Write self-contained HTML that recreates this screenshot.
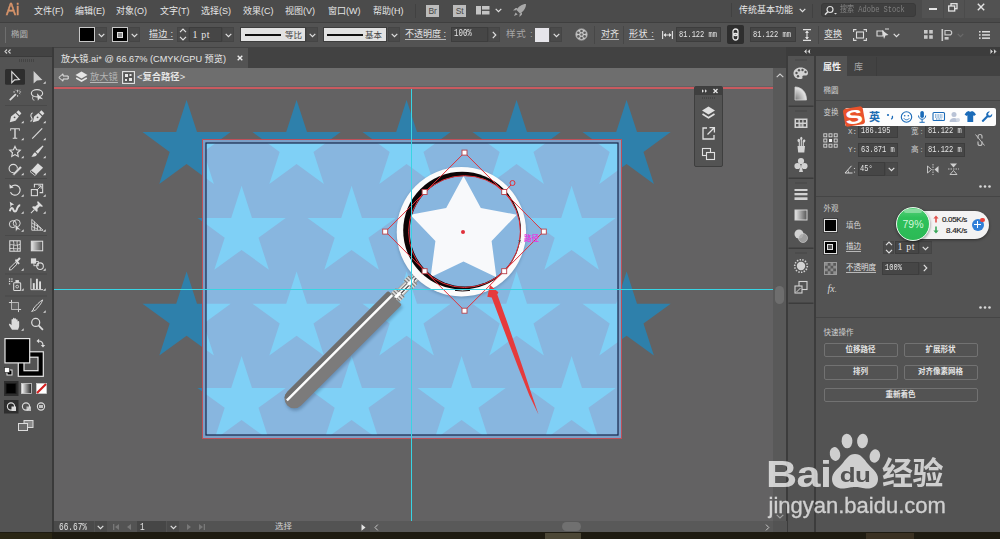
<!DOCTYPE html>
<html lang="zh-CN">
<head>
<meta charset="utf-8">
<title>放大镜.ai</title>
<style>
*{box-sizing:border-box;margin:0;padding:0}
html,body{width:1000px;height:539px;overflow:hidden;background:#535353}
body{position:relative;font-family:"Liberation Sans","Noto Sans CJK SC",sans-serif;font-size:9.5px;color:#e6e6e6;line-height:12px}
.a{position:absolute}
.t{position:absolute;white-space:nowrap;height:12px;line-height:12px}
.u{text-decoration:underline;text-underline-offset:2px;text-decoration-color:#b8b8b8}
.mono{font-family:"Liberation Mono","Noto Sans CJK SC",monospace}
.fld{position:absolute;background:#464646;border:1px solid #3d3d3d}
.dd{position:absolute;background:#4a4a4a;border:1px solid #454545}
.sq{transform:scaleX(.74);transform-origin:0 50%}
svg{position:absolute;overflow:visible}
.g{color:#a6a6a6}
.lbl{font-size:7.500px;color:#cfcfcf}.btn{border:1px solid #727272;border-radius:2px;text-align:center;font-size:7.500px;line-height:12.500px;font-weight:bold;color:#e4e4e4}
</style>
</head>
<body>

<!-- ===== BASE BACKGROUNDS ===== -->
<div class="a" style="left:0;top:0;width:1000px;height:22px;background:#4b4b4b"></div>
<div class="a" style="left:0;top:22px;width:1000px;height:26px;background:#535353;border-top:1px solid #3f3f3f"></div>
<div class="a" style="left:0;top:47px;width:1000px;height:21px;background:#424242"></div>
<div class="a" style="left:54px;top:68px;width:735px;height:453px;background:#636263"></div>

<svg id="cv" width="1000" height="539" viewBox="0 0 1000 539" style="left:0;top:0">
<defs>
<clipPath id="cvclip"><rect x="54" y="68" width="722" height="453"/></clipPath>
<clipPath id="abclip"><rect x="206" y="143" width="412" height="292"/></clipPath>
<clipPath id="lensclip"><circle cx="465" cy="231.2" r="55.3"/></clipPath>
<linearGradient id="hg" x1="0" y1="0" x2="0" y2="1"><stop offset="0" stop-color="#5a5a5a"/><stop offset=".22" stop-color="#8a8a8a"/><stop offset=".36" stop-color="#f2f2f2"/><stop offset=".5" stop-color="#8c8c8c"/><stop offset="1" stop-color="#6a6a6a"/></linearGradient>
<linearGradient id="cg" x1="0" y1="0" x2="0" y2="1"><stop offset="0" stop-color="#8a8a8a"/><stop offset=".25" stop-color="#fff"/><stop offset=".75" stop-color="#f4f4f4"/><stop offset="1" stop-color="#9a9a9a"/></linearGradient>
<filter id="sh" x="-20%" y="-20%" width="140%" height="140%"><feGaussianBlur stdDeviation="1.6"/></filter>
</defs>
<g clip-path="url(#cvclip)">
<g fill="#2e80ab">
<polygon points="186.6,100.0 197.0,132.1 230.7,132.1 203.5,151.9 213.9,183.9 186.6,164.1 159.3,183.9 169.7,151.9 142.5,132.1 176.2,132.1"/>
<polygon points="296.6,100.0 307.0,132.1 340.7,132.1 313.5,151.9 323.9,183.9 296.6,164.1 269.3,183.9 279.7,151.9 252.5,132.1 286.2,132.1"/>
<polygon points="406.6,100.0 417.0,132.1 450.7,132.1 423.5,151.9 433.9,183.9 406.6,164.1 379.3,183.9 389.7,151.9 362.5,132.1 396.2,132.1"/>
<polygon points="516.6,100.0 527.0,132.1 560.7,132.1 533.5,151.9 543.9,183.9 516.6,164.1 489.3,183.9 499.7,151.9 472.5,132.1 506.2,132.1"/>
<polygon points="626.6,100.0 637.0,132.1 670.7,132.1 643.5,151.9 653.9,183.9 626.6,164.1 599.3,183.9 609.7,151.9 582.5,132.1 616.2,132.1"/>
<polygon points="241.6,185.8 252.0,217.9 285.7,217.9 258.5,237.7 268.9,269.7 241.6,249.9 214.3,269.7 224.7,237.7 197.5,217.9 231.2,217.9"/>
<polygon points="351.6,185.8 362.0,217.9 395.7,217.9 368.5,237.7 378.9,269.7 351.6,249.9 324.3,269.7 334.7,237.7 307.5,217.9 341.2,217.9"/>
<polygon points="461.6,185.8 472.0,217.9 505.7,217.9 478.5,237.7 488.9,269.7 461.6,249.9 434.3,269.7 444.7,237.7 417.5,217.9 451.2,217.9"/>
<polygon points="571.6,185.8 582.0,217.9 615.7,217.9 588.5,237.7 598.9,269.7 571.6,249.9 544.3,269.7 554.7,237.7 527.5,217.9 561.2,217.9"/>
<polygon points="186.6,271.6 197.0,303.7 230.7,303.7 203.5,323.5 213.9,355.5 186.6,335.7 159.3,355.5 169.7,323.5 142.5,303.7 176.2,303.7"/>
<polygon points="296.6,271.6 307.0,303.7 340.7,303.7 313.5,323.5 323.9,355.5 296.6,335.7 269.3,355.5 279.7,323.5 252.5,303.7 286.2,303.7"/>
<polygon points="406.6,271.6 417.0,303.7 450.7,303.7 423.5,323.5 433.9,355.5 406.6,335.7 379.3,355.5 389.7,323.5 362.5,303.7 396.2,303.7"/>
<polygon points="516.6,271.6 527.0,303.7 560.7,303.7 533.5,323.5 543.9,355.5 516.6,335.7 489.3,355.5 499.7,323.5 472.5,303.7 506.2,303.7"/>
<polygon points="626.6,271.6 637.0,303.7 670.7,303.7 643.5,323.5 653.9,355.5 626.6,335.7 599.3,355.5 609.7,323.5 582.5,303.7 616.2,303.7"/>
<polygon points="241.6,355.9 252.0,388.0 285.7,388.0 258.5,407.8 268.9,439.8 241.6,420.0 214.3,439.8 224.7,407.8 197.5,388.0 231.2,388.0"/>
<polygon points="351.6,355.9 362.0,388.0 395.7,388.0 368.5,407.8 378.9,439.8 351.6,420.0 324.3,439.8 334.7,407.8 307.5,388.0 341.2,388.0"/>
<polygon points="461.6,355.9 472.0,388.0 505.7,388.0 478.5,407.8 488.9,439.8 461.6,420.0 434.3,439.8 444.7,407.8 417.5,388.0 451.2,388.0"/>
<polygon points="571.6,355.9 582.0,388.0 615.7,388.0 588.5,407.8 598.9,439.8 571.6,420.0 544.3,439.8 554.7,407.8 527.5,388.0 561.2,388.0"/>
</g>
<rect x="202.5" y="139.5" width="419" height="299" fill="none" stroke="#bf4f58" stroke-width="1"/>
<rect x="203" y="140" width="418" height="298" fill="#7b9fc7"/>
<rect x="206" y="143" width="412" height="292" fill="#88b6df"/>
<g clip-path="url(#abclip)" fill="#7fd0f6">
<polygon points="186.6,100.0 197.0,132.1 230.7,132.1 203.5,151.9 213.9,183.9 186.6,164.1 159.3,183.9 169.7,151.9 142.5,132.1 176.2,132.1"/>
<polygon points="296.6,100.0 307.0,132.1 340.7,132.1 313.5,151.9 323.9,183.9 296.6,164.1 269.3,183.9 279.7,151.9 252.5,132.1 286.2,132.1"/>
<polygon points="406.6,100.0 417.0,132.1 450.7,132.1 423.5,151.9 433.9,183.9 406.6,164.1 379.3,183.9 389.7,151.9 362.5,132.1 396.2,132.1"/>
<polygon points="516.6,100.0 527.0,132.1 560.7,132.1 533.5,151.9 543.9,183.9 516.6,164.1 489.3,183.9 499.7,151.9 472.5,132.1 506.2,132.1"/>
<polygon points="626.6,100.0 637.0,132.1 670.7,132.1 643.5,151.9 653.9,183.9 626.6,164.1 599.3,183.9 609.7,151.9 582.5,132.1 616.2,132.1"/>
<polygon points="241.6,185.8 252.0,217.9 285.7,217.9 258.5,237.7 268.9,269.7 241.6,249.9 214.3,269.7 224.7,237.7 197.5,217.9 231.2,217.9"/>
<polygon points="351.6,185.8 362.0,217.9 395.7,217.9 368.5,237.7 378.9,269.7 351.6,249.9 324.3,269.7 334.7,237.7 307.5,217.9 341.2,217.9"/>
<polygon points="461.6,185.8 472.0,217.9 505.7,217.9 478.5,237.7 488.9,269.7 461.6,249.9 434.3,269.7 444.7,237.7 417.5,217.9 451.2,217.9"/>
<polygon points="571.6,185.8 582.0,217.9 615.7,217.9 588.5,237.7 598.9,269.7 571.6,249.9 544.3,269.7 554.7,237.7 527.5,217.9 561.2,217.9"/>
<polygon points="186.6,271.6 197.0,303.7 230.7,303.7 203.5,323.5 213.9,355.5 186.6,335.7 159.3,355.5 169.7,323.5 142.5,303.7 176.2,303.7"/>
<polygon points="296.6,271.6 307.0,303.7 340.7,303.7 313.5,323.5 323.9,355.5 296.6,335.7 269.3,355.5 279.7,323.5 252.5,303.7 286.2,303.7"/>
<polygon points="406.6,271.6 417.0,303.7 450.7,303.7 423.5,323.5 433.9,355.5 406.6,335.7 379.3,355.5 389.7,323.5 362.5,303.7 396.2,303.7"/>
<polygon points="516.6,271.6 527.0,303.7 560.7,303.7 533.5,323.5 543.9,355.5 516.6,335.7 489.3,355.5 499.7,323.5 472.5,303.7 506.2,303.7"/>
<polygon points="626.6,271.6 637.0,303.7 670.7,303.7 643.5,323.5 653.9,355.5 626.6,335.7 599.3,355.5 609.7,323.5 582.5,303.7 616.2,303.7"/>
<polygon points="241.6,355.9 252.0,388.0 285.7,388.0 258.5,407.8 268.9,439.8 241.6,420.0 214.3,439.8 224.7,407.8 197.5,388.0 231.2,388.0"/>
<polygon points="351.6,355.9 362.0,388.0 395.7,388.0 368.5,407.8 378.9,439.8 351.6,420.0 324.3,439.8 334.7,407.8 307.5,388.0 341.2,388.0"/>
<polygon points="461.6,355.9 472.0,388.0 505.7,388.0 478.5,407.8 488.9,439.8 461.6,420.0 434.3,439.8 444.7,407.8 417.5,388.0 451.2,388.0"/>
<polygon points="571.6,355.9 582.0,388.0 615.7,388.0 588.5,407.8 598.9,439.8 571.6,420.0 544.3,439.8 554.7,407.8 527.5,388.0 561.2,388.0"/>
</g>
<rect x="206" y="143" width="412" height="292" fill="none" stroke="#16264a" stroke-width="1.2"/>
<g transform="translate(410.9,281.9) rotate(135)">
<path d="M22.5,-9.75 H165 a9.75,9.75 0 0 1 0,19.5 H22.5 Z" fill="#2a4a6a" opacity=".35" filter="url(#sh)" transform="translate(1,-2.5)"/>
<rect x="-10" y="-4.6" width="34" height="9.200" fill="url(#cg)"/>
<rect x="-10" y="-1.800" width="34" height="1.300" fill="#4a4a4a"/><rect x="-10" y="1.200" width="34" height="1" fill="#6a6a6a"/>
<rect x="-3" y="-6.200" width="7" height="12.400" fill="#d8d8d8"/>
<rect x="-3" y="-6.200" width="1.200" height="12.400" fill="#7a7a7a"/><rect x="-0.1" y="-6.200" width="1.200" height="12.400" fill="#7a7a7a"/><rect x="2.8" y="-6.200" width="1.200" height="12.400" fill="#7a7a7a"/>
<rect x="-3" y="-1.500" width="7" height="3" fill="#fff"/>
<rect x="15" y="-6.200" width="7" height="12.400" fill="#d8d8d8"/>
<rect x="15" y="-6.200" width="1.200" height="12.400" fill="#7a7a7a"/><rect x="17.9" y="-6.200" width="1.200" height="12.400" fill="#7a7a7a"/><rect x="20.8" y="-6.200" width="1.200" height="12.400" fill="#7a7a7a"/>
<rect x="15" y="-1.500" width="7" height="3" fill="#fff"/>
<path d="M24,-9.750 H165 a9.750,9.750 0 0 1 0,19.500 H24 a1.500,1.500 0 0 1 -1.500,-1.500 V-8.250 a1.500,1.500 0 0 1 1.500,-1.500 Z" fill="#7c7b7b"/>
<path d="M24,9.750 H165 a9.750,9.750 0 0 0 6.500,-2.500 L170,5 H22.500 V8.250 a1.500,1.500 0 0 0 1.500,1.500 Z" fill="#6e6e6e"/>
<rect x="22.500" y="2.650" width="149" height="2.400" fill="#fdfdfd"/>
</g>
<circle cx="461.4" cy="233" r="65" fill="#3a5a7a" opacity=".35" filter="url(#sh)"/>
<circle cx="461.4" cy="231.8" r="64.7" fill="#fbfbfb"/>
<path d="M455,290.400 Q462.500,291.600 470,290.400" fill="none" stroke="#1a0a0c" stroke-width="1"/>
<circle cx="462.1" cy="230.6" r="58.9" fill="#0c0506"/>
<circle cx="465" cy="231.2" r="55.3" fill="#88b6df"/>
<g clip-path="url(#lensclip)"><polygon points="463.5,176.0 480.8,208.1 516.8,214.7 491.6,241.1 496.4,277.3 463.5,261.5 430.6,277.3 435.4,241.1 410.2,214.7 446.2,208.1" fill="#f8f9fb"/></g>
<g fill="none" stroke="#e0303a" stroke-width="1">
<circle cx="464.5" cy="231.6" r="55.9"/>
<polygon points="464.5,152.6 543.5,231.6 464.5,310.7 385.5,231.6"/>
<line x1="504.2" y1="192.2" x2="511" y2="185"/>
<circle cx="512.5" cy="183" r="2.5"/>
</g>
<rect x="462.0" y="150.1" width="5" height="5" fill="#fff" stroke="#b8404a" stroke-width=".9"/>
<rect x="541.3" y="229.1" width="5" height="5" fill="#fff" stroke="#b8404a" stroke-width=".9"/>
<rect x="462.0" y="308.2" width="5" height="5" fill="#fff" stroke="#b8404a" stroke-width=".9"/>
<rect x="382.7" y="229.1" width="5" height="5" fill="#fff" stroke="#b8404a" stroke-width=".9"/>
<rect x="422.1" y="189.5" width="5" height="5" fill="#fff" stroke="#b8404a" stroke-width=".9"/>
<rect x="501.7" y="189.5" width="5" height="5" fill="#fff" stroke="#b8404a" stroke-width=".9"/>
<rect x="422.1" y="268.7" width="5" height="5" fill="#fff" stroke="#b8404a" stroke-width=".9"/>
<rect x="501.7" y="268.7" width="5" height="5" fill="#fff" stroke="#b8404a" stroke-width=".9"/>
<circle cx="463" cy="232" r="2" fill="#e0303a"/>
<polygon points="490,285 498.4,292.2 497.3,294.6 508.2,325 523.2,369 532,395.5 538.5,414.6 529.4,395.5 518.8,369 502,325 491.7,297.4 487.3,296.8" fill="#e63a3c"/>
<rect x="411" y="88" width="1" height="433" fill="#38d4e4"/>
<rect x="54" y="289" width="722" height="1" fill="#38d4e4"/>
</g>
<path d="M518.5,240 l2.400,2.400 m0,-2.400 l-2.400,2.400" stroke="#333" stroke-width=".7"/>
<text x="524" y="240.500" font-size="7.500" fill="#e23ee2" font-weight="bold" font-family="'Liberation Sans','Noto Sans CJK SC',sans-serif">路径</text>
</svg>
<!-- ===== MENU BAR ===== -->
<div class="t" style="left:6px;top:0px;font-size:16.5px;height:19px;line-height:19px;color:#d8946a;-webkit-text-stroke:.5px #d8946a;transform:scaleX(.9);transform-origin:0 50%">Ai</div>
<div class="t" style="left:34px;top:5px;font-size:9px">文件(F)</div>
<div class="t" style="left:75px;top:5px;font-size:9px">编辑(E)</div>
<div class="t" style="left:116px;top:5px;font-size:9px">对象(O)</div>
<div class="t" style="left:160px;top:5px;font-size:9px">文字(T)</div>
<div class="t" style="left:201px;top:5px;font-size:9px">选择(S)</div>
<div class="t" style="left:243px;top:5px;font-size:9px">效果(C)</div>
<div class="t" style="left:285px;top:5px;font-size:9px">视图(V)</div>
<div class="t" style="left:328px;top:5px;font-size:9px">窗口(W)</div>
<div class="t" style="left:373px;top:5px;font-size:9px">帮助(H)</div>
<div class="a" style="left:415px;top:4px;width:1px;height:14px;background:#414141"></div>
<div class="a" style="left:426px;top:5px;width:13px;height:12px;background:#bcbcbc;color:#484848;font-size:8.5px;line-height:12px;text-align:center;letter-spacing:-.3px">Br</div>
<div class="a" style="left:453px;top:5px;width:13px;height:12px;background:#bcbcbc;color:#484848;font-size:8.5px;line-height:12px;text-align:center;letter-spacing:-.3px">St</div>
<svg style="left:476px;top:6px" width="14" height="9"><rect x="0" y="0" width="5" height="8.5" fill="#c4c4c4"/><rect x="6" y="0" width="7.5" height="3.6" fill="#c4c4c4"/><rect x="6" y="4.9" width="7.5" height="3.6" fill="#c4c4c4"/></svg>
<svg style="left:495px;top:8px" width="7" height="5"><path d="M.7,.8 L3.5,3.6 L6.3,.8" fill="none" stroke="#e0e0e0" stroke-width="1.2"/></svg>
<svg style="left:512px;top:3px" width="15" height="15" viewBox="0 0 15 15"><path d="M14,1 C10,1 6.5,3.5 4.5,7 L8,10.5 C11.5,8.5 14,5 14,1 Z" fill="#a8a8a8"/><path d="M4.2,7.2 L1,7.6 L3.6,5 L5.6,5 Z" fill="#a8a8a8"/><path d="M7.8,10.8 L7.4,14 L10,11.4 L10,9.4 Z" fill="#a8a8a8"/><path d="M3.6,9.4 L5.6,11.4 L2,13 Z" fill="#a8a8a8"/></svg>
<div class="a" style="left:731px;top:3px;width:1px;height:14px;background:#414141"></div>
<div class="t" style="left:739px;top:3.500px;font-size:9px">传统基本功能</div>
<svg style="left:799px;top:8px" width="7" height="5"><path d="M.7,.8 L3.5,3.6 L6.3,.8" fill="none" stroke="#e0e0e0" stroke-width="1.2"/></svg>
<div class="a" style="left:812px;top:4px;width:1px;height:14px;background:#414141"></div>
<div class="a" style="left:821px;top:3px;width:95px;height:14px;background:#3f3f3f;border:1px solid #3a3a3a;border-radius:3px"></div>
<svg style="left:824px;top:4.500px" width="14" height="11"><circle cx="6" cy="4.5" r="3" fill="none" stroke="#e0e0e0" stroke-width="1.2"/><path d="M3.8,6.8 L1,9.8" stroke="#e0e0e0" stroke-width="1.4"/><path d="M10,8 l1.5,1.5 l1.5,-1.5" fill="#e0e0e0"/></svg>
<div class="t mono sq" style="left:840px;top:4px;color:#808080;font-size:9.5px">搜索 Adobe Stock</div>
<div class="a" style="left:922px;top:0;width:78px;height:17.500px;background:#525252"></div><div class="a" style="left:943px;top:0;width:1px;height:17.500px;background:#4b4b4b"></div><div class="a" style="left:964px;top:0;width:1px;height:17.500px;background:#4b4b4b"></div>
<div class="a" style="left:929px;top:8.300px;width:8px;height:2px;background:#e4e4e4"></div>
<svg style="left:948px;top:3px" width="10" height="9"><rect x="3" y=".7" width="6" height="5" fill="none" stroke="#e4e4e4" stroke-width="1.3"/><rect x=".7" y="3" width="6" height="5" fill="#525252" stroke="#e4e4e4" stroke-width="1.3"/></svg>
<svg style="left:977px;top:3px" width="8" height="8"><path d="M.8,.8 L7.200,7.200 M7.200,.8 L.8,7.200" stroke="#e4e4e4" stroke-width="1.400"/></svg>

<!-- ===== CONTROL BAR ===== -->
<div class="a" style="left:5px;top:27px;width:1px;height:16px;background:#6e6e6e"></div>
<div class="t" style="left:11px;top:28px;font-size:8.5px;color:#b2b2b2">椭圆</div>
<div class="a" style="left:79px;top:27px;width:16px;height:15px;background:#000;border:1px solid #c8c8c8"></div>
<div class="dd" style="left:95px;top:27px;width:12px;height:15px"></div>
<svg style="left:97.5px;top:33px" width="7" height="5"><path d="M.7,.8 L3.5,3.6 L6.3,.8" fill="none" stroke="#e0e0e0" stroke-width="1.2"/></svg>
<div class="a" style="left:112px;top:27px;width:16px;height:15px;background:#000;border:1px solid #c8c8c8"></div>
<div class="a" style="left:117px;top:31.5px;width:6px;height:6px;background:#8a8a8a;border:1px solid #e0e0e0"></div>
<div class="dd" style="left:128px;top:27px;width:12px;height:15px"></div>
<svg style="left:130.5px;top:33px" width="7" height="5"><path d="M.7,.8 L3.5,3.6 L6.3,.8" fill="none" stroke="#e0e0e0" stroke-width="1.2"/></svg>
<div class="t u" style="left:149px;top:28px;font-size:9px;letter-spacing:.3px">描边 :</div>
<div class="dd" style="left:177px;top:27px;width:12px;height:15px"></div>
<svg style="left:179px;top:28px" width="8" height="13"><path d="M1,4.2 L4,1.2 L7,4.2 M1,8.8 L4,11.8 L7,8.8" fill="none" stroke="#e0e0e0" stroke-width="1.2"/></svg>
<div class="fld" style="left:189px;top:27px;width:33px;height:15px"></div>
<div class="t" style="left:192.5px;top:28.5px;font-size:10px;letter-spacing:.6px;font-family:'Liberation Serif',serif">1 pt</div>
<div class="dd" style="left:222px;top:27px;width:12px;height:15px"></div>
<svg style="left:224.5px;top:33px" width="7" height="5"><path d="M.7,.8 L3.5,3.6 L6.3,.8" fill="none" stroke="#e0e0e0" stroke-width="1.2"/></svg>
<div class="a" style="left:240px;top:27px;width:66px;height:15px;background:#464646;border:1px solid #3d3d3d"></div>
<div class="a" style="left:241px;top:28px;width:64px;height:13px;background:#e2e2e2"></div>
<div class="a" style="left:245px;top:33.5px;width:36px;height:2px;background:#111"></div>
<div class="t" style="left:285px;top:28.5px;color:#444;font-size:8.5px">等比</div>
<div class="dd" style="left:306px;top:27px;width:12px;height:15px"></div>
<svg style="left:308.5px;top:33px" width="7" height="5"><path d="M.7,.8 L3.5,3.6 L6.3,.8" fill="none" stroke="#e0e0e0" stroke-width="1.2"/></svg>
<div class="a" style="left:323px;top:27px;width:64px;height:15px;background:#464646;border:1px solid #3d3d3d"></div>
<div class="a" style="left:324px;top:28px;width:62px;height:13px;background:#e2e2e2"></div>
<div class="a" style="left:327px;top:33.5px;width:36px;height:2px;background:#111"></div>
<div class="t" style="left:365px;top:28.5px;color:#444;font-size:8.5px">基本</div>
<div class="dd" style="left:388px;top:27px;width:12px;height:15px"></div>
<svg style="left:390.5px;top:33px" width="7" height="5"><path d="M.7,.8 L3.5,3.6 L6.3,.8" fill="none" stroke="#e0e0e0" stroke-width="1.2"/></svg>
<div class="t u" style="left:405px;top:28px;font-size:9px;letter-spacing:0">不透明度 :</div>
<div class="fld" style="left:451px;top:27px;width:37px;height:15px"></div>
<div class="t mono sq" style="left:454px;top:28px;font-size:10px">100%</div>
<div class="dd" style="left:488px;top:27px;width:12px;height:15px"></div>
<svg style="left:492px;top:31px" width="5" height="8"><path d="M.8,.8 L3.8,4 L.8,7.2" fill="none" stroke="#e0e0e0" stroke-width="1.2"/></svg>
<div class="t g" style="left:506px;top:28px;letter-spacing:.8px">样式 :</div>
<div class="a" style="left:535px;top:27.5px;width:14px;height:14px;background:#e6e5ea"></div>
<div class="dd" style="left:550px;top:27px;width:12px;height:15px"></div>
<svg style="left:552.5px;top:33px" width="7" height="5"><path d="M.7,.8 L3.5,3.6 L6.3,.8" fill="none" stroke="#e0e0e0" stroke-width="1.2"/></svg>
<svg style="left:575px;top:28px" width="13" height="13" viewBox="0 0 13 13"><circle cx="6.5" cy="6.5" r="5.8" fill="#c9c9c9" stroke="#9a9a9a" stroke-width=".8"/><circle cx="6.5" cy="6.5" r="1.2" fill="#666"/><g fill="#5c5c5c"><circle cx="6.5" cy="3" r="1.3"/><circle cx="6.5" cy="10" r="1.3"/><circle cx="3.4" cy="4.8" r="1.3"/><circle cx="9.6" cy="4.8" r="1.3"/><circle cx="3.4" cy="8.4" r="1.3"/><circle cx="9.6" cy="8.4" r="1.3"/></g></svg>
<div class="a" style="left:594px;top:26px;width:1px;height:18px;background:#474747"></div>
<div class="t u" style="left:601px;top:28px;font-size:9px">对齐</div>
<div class="a" style="left:623px;top:26px;width:1px;height:18px;background:#474747"></div>
<div class="t u" style="left:629px;top:28px;font-size:9px;letter-spacing:.6px">形状 :</div>
<svg style="left:662px;top:31px" width="11" height="8"><path d="M.6,0 V8 M10.4,0 V8 M2,4 H9" stroke="#e0e0e0" stroke-width="1.1" fill="none"/><path d="M1.4,4 L4,2 V6 Z M9.6,4 L7,2 V6 Z" fill="#e0e0e0"/></svg>
<div class="fld" style="left:676px;top:27px;width:45px;height:15px"></div>
<div class="t mono sq" style="left:679px;top:28.5px;font-size:9.5px">81.122 mm</div>
<div class="a" style="left:727px;top:25px;width:17px;height:19px;background:#2e2e2e;border-radius:2px"></div>
<svg style="left:732px;top:28px" width="7" height="13" viewBox="0 0 7 13"><rect x="1" y="1" width="5" height="6.5" rx="2.5" fill="none" stroke="#e8e8e8" stroke-width="1.3"/><rect x="1" y="5.5" width="5" height="6.5" rx="2.5" fill="none" stroke="#e8e8e8" stroke-width="1.3"/></svg>
<div class="fld" style="left:750px;top:27px;width:46px;height:15px"></div>
<div class="t mono sq" style="left:753px;top:28.5px;font-size:9.5px">81.122 mm</div>
<svg style="left:803px;top:29px" width="8" height="12"><path d="M0,.6 H8 M0,11.4 H8 M4,2 V10" stroke="#e0e0e0" stroke-width="1.1" fill="none"/><path d="M4,1.4 L2,4 H6 Z M4,10.6 L2,8 H6 Z" fill="#e0e0e0"/></svg>
<div class="a" style="left:818px;top:26px;width:1px;height:18px;background:#474747"></div>
<div class="t u" style="left:824px;top:28px;font-size:9px">变换</div>
<svg style="left:853px;top:29px" width="14" height="12" viewBox="0 0 14 12"><rect x="3.5" y="3" width="7" height="6" fill="none" stroke="#dcdcdc" stroke-width="1.1"/><path d="M.6,3 V.6 H3.5 M10.5,.6 H13.4 V3 M13.4,9 V11.4 H10.5 M3.5,11.4 H.6 V9" fill="none" stroke="#dcdcdc" stroke-width="1.1"/></svg>
<svg style="left:876px;top:28px" width="14" height="13" viewBox="0 0 14 13"><path d="M1,3 H7 V8 H1 Z" fill="none" stroke="#dcdcdc" stroke-width="1.1"/><path d="M6,2 L12.5,7 L9.5,7.5 L8,11 Z" fill="#dcdcdc"/><path d="M9,1 h4" stroke="#dcdcdc" stroke-width="1"/></svg>
<svg style="left:893px;top:33px" width="7" height="5"><path d="M.7,.8 L3.5,3.6 L6.3,.8" fill="none" stroke="#e0e0e0" stroke-width="1.2"/></svg>
<svg style="left:924px;top:30px" width="9" height="9"><g fill="#c8c8c8"><rect x="0" y="0" width="3.6" height="3.6"/><rect x="5.2" y="0" width="3.6" height="3.6"/><rect x="0" y="5.2" width="3.6" height="3.6"/><rect x="5.2" y="5.2" width="3.6" height="3.6"/></g></svg>
<svg style="left:941px;top:29px" width="13" height="12" viewBox="0 0 13 12"><rect x=".5" y="0" width="1.6" height="12" fill="#c8c8c8"/><path d="M4,1.5 H8.5 a2.2,2.2 0 0 1 0,4.4 H4 Z" fill="none" stroke="#c8c8c8" stroke-width="1.2"/><rect x="3.6" y="8" width="4" height="2.6" fill="#c8c8c8"/></svg>
<svg style="left:957px;top:33px" width="7" height="5"><path d="M.7,.8 L3.5,3.6 L6.3,.8" fill="none" stroke="#6a6a6a" stroke-width="1.2"/></svg>
<svg style="left:979px;top:31px" width="11" height="8"><g fill="#dcdcdc"><rect x="0" y="0" width="1.6" height="1.5"/><rect x="3" y="0" width="8" height="1.5"/><rect x="0" y="3.2" width="1.6" height="1.5"/><rect x="3" y="3.2" width="8" height="1.5"/><rect x="0" y="6.4" width="1.6" height="1.5"/><rect x="3" y="6.4" width="8" height="1.5"/></g></svg>

<!-- ===== TAB ROW ===== -->
<div class="a" style="left:54px;top:48px;width:194px;height:20px;background:#535353"></div>
<div class="t" style="left:61px;top:52.5px;font-size:9.2px">放大镜.ai* @ 66.67% (CMYK/GPU 预览)</div>
<svg style="left:237px;top:55px" width="6" height="6"><path d="M.7,.7 L5.3,5.3 M5.3,.7 L.7,5.3" stroke="#ececec" stroke-width="1.4"/></svg>
<!-- breadcrumb -->
<div class="a" style="left:54px;top:68px;width:735px;height:18px;background:#6e6e6e"></div>
<svg style="left:58px;top:73px" width="11" height="9" viewBox="0 0 11 9"><path d="M.8,4.5 L5,.8 V3 H10.2 V6 H5 V8.2 Z" fill="none" stroke="#e6e6e6" stroke-width="1"/></svg>
<svg style="left:75px;top:71px" width="13" height="12" viewBox="0 0 13 12"><path d="M6.5,.5 L12.5,4 L6.5,7.5 L.5,4 Z" fill="#e6e6e6"/><path d="M1.2,7 L6.5,10 L11.8,7" fill="none" stroke="#e6e6e6" stroke-width="1.6"/></svg>
<div class="t u" style="left:90px;top:71px;color:#b4b4b4;font-size:9.3px">放大镜</div>
<svg style="left:122px;top:71px" width="13" height="13" viewBox="0 0 13 13"><rect x=".6" y=".6" width="11.8" height="11.8" fill="#555" stroke="#e6e6e6" stroke-width="1.1"/><rect x="3" y="3" width="3" height="3" fill="#e6e6e6"/><rect x="7" y="7" width="3" height="3" fill="#e6e6e6"/><rect x="7.5" y="3" width="2" height="2" fill="#e6e6e6"/><rect x="3" y="8" width="2" height="2" fill="#e6e6e6"/></svg>
<div class="t" style="left:137px;top:71px;font-size:9.3px;font-weight:bold"><span style="font-weight:normal">&lt;</span>复合路径<span style="font-weight:normal">&gt;</span></div>
<div class="a" style="left:54px;top:86.500px;width:735px;height:2.700px;background:#c85a5f"></div>

<!-- ===== LEFT TOOLBOX ===== -->
<div class="a" style="left:0;top:47px;width:54px;height:485px;background:#3a3a3a"></div>
<div class="a" style="left:0;top:47px;width:52px;height:9px;background:#434343"></div>
<div class="a" style="left:0;top:57px;width:52px;height:475px;background:#535353"></div>
<svg id="tb" width="54" height="539" viewBox="0 0 54 539" style="left:0;top:0">
<path d="M7,49.5 L5,51.5 L7,53.5 M10.5,49.5 L8.5,51.5 L10.5,53.5" fill="none" stroke="#d0d0d0" stroke-width="1.1"/>
<g fill="#444"><rect x="19" y="59" width="1" height="3"/><rect x="21" y="59" width="1" height="3"/><rect x="23" y="59" width="1" height="3"/><rect x="25" y="59" width="1" height="3"/><rect x="27" y="59" width="1" height="3"/><rect x="29" y="59" width="1" height="3"/><rect x="31" y="59" width="1" height="3"/><rect x="33" y="59" width="1" height="3"/></g>
<rect x="5" y="105.0" width="42" height="1" fill="#494949"/>
<rect x="5" y="178.0" width="42" height="1" fill="#494949"/>
<rect x="5" y="235.0" width="42" height="1" fill="#494949"/>
<rect x="5" y="273.5" width="42" height="1" fill="#494949"/>
<rect x="5" y="295.5" width="42" height="1" fill="#494949"/>
<rect x="5" y="69" width="20" height="15.7" rx="1.5" fill="#2e2e2e"/>
<path d="M11.8,71.6 L11.8,82.6 L14.7,79.9 L19.3,79.5 Z" fill="none" stroke="#dcdcdc" stroke-width="1.15" stroke-linejoin="miter"/>
<path d="M33.6,71 L33.6,83.6 L36.9,80.4 L42.4,80 Z" fill="#cfcfcf"/>
<path d="M45.7,83.8 v-2.6 l-2.6,2.6 Z" fill="#dcdcdc"/>
<g transform="translate(15.0,95.0) scale(.87)"><path d="M-6,6 L1,-1" stroke="#dcdcdc" stroke-width="2"/><path d="M3,-6 v3 M3,0 v2 M0,-3.5 h-2 M5,-3.5 h2 M5.5,-6 l-1,1 M.5,-6 l1,1 M6,-1 l-1,-1" stroke="#dcdcdc" stroke-width="1"/></g>
<g transform="translate(37.0,95.0) scale(.87)"><ellipse cx="0" cy="-2" rx="6.5" ry="4.2" fill="none" stroke="#dcdcdc" stroke-width="1.3"/><path d="M-4,1 c-2,2 -1,5 1,5" fill="none" stroke="#dcdcdc" stroke-width="1.1"/><path d="M0,-2 L1,6.5 L3,4 L7,5 Z" fill="#dcdcdc"/></g>
<g transform="translate(15.0,116.5) scale(.87)"><path d="M-6,6.5 L-4.5,0 L0.5,-4 L4.5,0 L0.5,5 Z" fill="#dcdcdc"/><path d="M1.5,-5 L4,-7.2 L7.3,-3.6 L5.3,-1.2 Z" fill="#dcdcdc"/><circle cx="-0.5" cy="1" r="1.1" fill="#535353"/></g>
<path d="M23.7,123.3 v-2.6 l-2.6,2.6 Z" fill="#dcdcdc"/>
<g transform="translate(38.0,116.5) scale(.87)"><path d="M-6,6.5 L-4.5,0 L0.5,-4 L4.5,0 L0.5,5 Z" fill="#dcdcdc"/><path d="M1.5,-5 L4,-7.2 L7.3,-3.6 L5.3,-1.2 Z" fill="#dcdcdc"/><circle cx="-0.5" cy="1" r="1.1" fill="#535353"/><path d="M-9,5 c2,1 3,-2 1.5,-4 c-1.5,-2 -0.5,-5 1.5,-5" fill="none" stroke="#dcdcdc" stroke-width="1.2"/></g>
<path d="M45.7,123.3 v-2.6 l-2.6,2.6 Z" fill="#dcdcdc"/>
<g transform="translate(15.0,133.5) scale(.87)"><path d="M-5.5,-6 H5.5 V-3.2 H4.5 V-4.8 H0.8 V5 H2.6 V6 H-2.6 V5 H-0.8 V-4.8 H-4.5 V-3.2 H-5.5 Z" fill="#dcdcdc"/></g>
<path d="M23.7,140.3 v-2.6 l-2.6,2.6 Z" fill="#dcdcdc"/>
<g transform="translate(37.0,133.5) scale(.87)"><path d="M-5.5,6 L6,-6" stroke="#dcdcdc" stroke-width="1.3"/></g>
<path d="M45.7,140.3 v-2.6 l-2.6,2.6 Z" fill="#dcdcdc"/>
<g transform="translate(15.0,151.5) scale(.87)"><polygon points="0.0,-5.8 1.8,-1.9 6.0,-1.4 2.9,1.4 3.7,5.6 0.0,3.5 -3.7,5.6 -2.9,1.4 -6.0,-1.4 -1.8,-1.9" fill="none" stroke="#dcdcdc" stroke-width="1.3"/></g>
<path d="M23.7,158.3 v-2.6 l-2.6,2.6 Z" fill="#dcdcdc"/>
<g transform="translate(37.0,151.5) scale(.87)"><path d="M6.5,-7 L7.5,-6 L1,2.5 L-1.5,0 Z" fill="#dcdcdc"/><path d="M-2.3,1 L0,3.3 C-1,6 -4,6.5 -6.5,6 C-5,5 -4.5,2 -2.3,1 Z" fill="#dcdcdc"/></g>
<path d="M45.7,158.3 v-2.6 l-2.6,2.6 Z" fill="#dcdcdc"/>
<g transform="translate(15.0,168.5) scale(.87)"><circle cx="-2" cy="0" r="4.8" fill="none" stroke="#dcdcdc" stroke-width="1.3"/><path d="M-3,6.5 L6,-3 L8,-1 L-1,8 Z" fill="#dcdcdc" stroke="#535353" stroke-width=".6"/></g>
<path d="M23.7,175.3 v-2.6 l-2.6,2.6 Z" fill="#dcdcdc"/>
<g transform="translate(37.0,168.5) scale(.87)"><path d="M-6.5,2 L1,-6 L7,-1 L-0.5,6.5 Z" fill="#dcdcdc"/><path d="M-6.5,2 L-0.5,6.5 L-2.5,8 L-8,3.5 Z" fill="none" stroke="#dcdcdc" stroke-width="1"/></g>
<path d="M45.7,175.3 v-2.6 l-2.6,2.6 Z" fill="#dcdcdc"/>
<g transform="translate(15.0,190.0) scale(.87)"><path d="M-4.2,-3.8 A5.8,5.8 0 1 1 -5.2,2.6" fill="none" stroke="#dcdcdc" stroke-width="1.3"/><path d="M-6.5,-6.5 L-6,-1.8 L-1.5,-3 Z" fill="#dcdcdc"/></g>
<path d="M23.7,196.8 v-2.6 l-2.6,2.6 Z" fill="#dcdcdc"/>
<g transform="translate(37.0,190.0) scale(.87)"><rect x="-6.5" y="-0.5" width="7" height="7" fill="none" stroke="#dcdcdc" stroke-width="1.2"/><path d="M-3,-3 V-6.5 H6.5 V3 H3" fill="none" stroke="#dcdcdc" stroke-width="1.2"/><path d="M-0.5,0.5 L4.5,-4.5 M1.5,-4.8 H4.8 V-1.5" fill="none" stroke="#dcdcdc" stroke-width="1.1"/></g>
<path d="M45.7,196.8 v-2.6 l-2.6,2.6 Z" fill="#dcdcdc"/>
<g transform="translate(15.0,207.0) scale(.87)"><path d="M-6,5 c1,-4 3,-5 4,-2 c1,3 3,3 4,0 c1,-3 2,-5 4,-5" fill="none" stroke="#dcdcdc" stroke-width="2.2"/><path d="M-6,-6 l5,3 l-3,1 l-1,3 Z" fill="#dcdcdc"/></g>
<path d="M23.7,213.8 v-2.6 l-2.6,2.6 Z" fill="#dcdcdc"/>
<g transform="translate(37.0,207.0) scale(.87)"><path d="M1,-7 L7,-1 L5.5,-0.2 L3.2,-1 L0.5,2 L0.8,4.8 L-0.5,5.5 L-5.5,0.5 L-4.8,-0.8 L-2,-0.5 L1,-3.2 L0.2,-5.5 Z" fill="#dcdcdc"/><path d="M-3,3 L-7,7" stroke="#dcdcdc" stroke-width="1.2"/></g>
<path d="M45.7,213.8 v-2.6 l-2.6,2.6 Z" fill="#dcdcdc"/>
<g transform="translate(15.0,225.0) scale(.87)"><circle cx="-2.5" cy="-1" r="4" fill="none" stroke="#dcdcdc" stroke-width="1.1"/><circle cx="2" cy="-2" r="4" fill="none" stroke="#dcdcdc" stroke-width="1.1"/><path d="M0,-1 L1,7.5 L3,5 L7,6 Z" fill="#dcdcdc" stroke="#535353" stroke-width=".5"/></g>
<path d="M23.7,231.8 v-2.6 l-2.6,2.6 Z" fill="#dcdcdc"/>
<g transform="translate(37.0,225.0) scale(.87)"><path d="M-6,-6.5 V6 H7 Z M-6,-2.5 L3.5,3 M-6,1.5 L0,4.5 M-3,-4 V6 M0.5,-0.8 V6 M3.8,2.6 V6" fill="none" stroke="#dcdcdc" stroke-width="1"/></g>
<path d="M45.7,231.8 v-2.6 l-2.6,2.6 Z" fill="#dcdcdc"/>
<g transform="translate(15.0,246.0) scale(.87)"><rect x="-6" y="-6" width="12" height="12" fill="none" stroke="#dcdcdc" stroke-width="1.2"/><path d="M-6,-1 c3,-2 5,2 12,-1 M-6,3 c4,-1 6,1 12,0 M-2,-6 c2,4 -1,7 1,12 M2.5,-6 c-1,4 2,8 0,12" fill="none" stroke="#dcdcdc" stroke-width="1"/></g>
<defs><linearGradient id="tg" x1="0" y1="0" x2="1" y2="0"><stop offset="0" stop-color="#e8e8e8"/><stop offset="1" stop-color="#4a4a4a"/></linearGradient><linearGradient id="tg2" x1="0" y1="0" x2="1" y2="0"><stop offset="0" stop-color="#fff"/><stop offset="1" stop-color="#222"/></linearGradient></defs>
<g transform="translate(37.0,246.0) scale(.87)"><rect x="-6.5" y="-5.5" width="13" height="11" fill="url(#tg)" stroke="#dcdcdc" stroke-width="1.2"/></g>
<g transform="translate(15.0,264.0) scale(.87)"><path d="M-6.5,7 L-6,4.5 L0.5,-2 L2.5,0 L-4,6.5 Z" fill="none" stroke="#dcdcdc" stroke-width="1.1"/><path d="M0,-3.5 L4,0.5 L5.5,-1 L3.5,-3 L6,-5.5 C7,-7 5,-8 4,-7 L2,-5 L1,-6 Z" fill="#dcdcdc"/></g>
<path d="M23.7,270.8 v-2.6 l-2.6,2.6 Z" fill="#dcdcdc"/>
<g transform="translate(37.0,264.0) scale(.87)"><rect x="-7" y="-6.5" width="6" height="6" fill="#dcdcdc"/><circle cx="3.5" cy="2.5" r="3.8" fill="none" stroke="#dcdcdc" stroke-width="1.2"/><rect x="-3.5" y="-3" width="5" height="5" fill="none" stroke="#dcdcdc" stroke-width="1"/></g>
<path d="M45.7,270.8 v-2.6 l-2.6,2.6 Z" fill="#dcdcdc"/>
<g transform="translate(15.0,284.0) scale(.87)"><rect x="-1.5" y="-1.5" width="8" height="9" rx="1" fill="none" stroke="#dcdcdc" stroke-width="1.2"/><rect x="0.5" y="-4.5" width="4" height="3" fill="#dcdcdc"/><circle cx="2.5" cy="3" r="1.6" fill="none" stroke="#dcdcdc" stroke-width="1"/><g fill="#dcdcdc"><rect x="-7" y="-6.5" width="1.5" height="1.5"/><rect x="-4.3" y="-6.5" width="1.5" height="1.5"/><rect x="-7" y="-3.8" width="1.5" height="1.5"/><rect x="-4.3" y="-3.8" width="1.5" height="1.5"/><rect x="-7" y="-1" width="1.5" height="1.5"/></g></g>
<path d="M23.7,290.8 v-2.6 l-2.6,2.6 Z" fill="#dcdcdc"/>
<g transform="translate(37.0,284.0) scale(.87)"><path d="M-7,-6.5 V6.5 H7" fill="none" stroke="#dcdcdc" stroke-width="1.1"/><rect x="-4.8" y="-1" width="2.2" height="7" fill="#dcdcdc"/><rect x="-1.2" y="-6" width="2.2" height="12" fill="#dcdcdc"/><rect x="2.4" y="-3" width="2.2" height="9" fill="#dcdcdc"/></g>
<path d="M45.7,290.8 v-2.6 l-2.6,2.6 Z" fill="#dcdcdc"/>
<g transform="translate(15.0,306.0) scale(.87)"><path d="M-4,-7 V4 H7 M-7,-4 H4 V7" fill="none" stroke="#dcdcdc" stroke-width="1.1"/><rect x="-4" y="-4" width="8" height="8" fill="#6a6a6a" opacity=".6"/></g>
<g transform="translate(37.0,306.0) scale(.87)"><path d="M6.5,-7 C3,-5 -1,-1 -4.5,3.5 L-2.5,5.5 C1,2 5.5,-3 6.5,-7 Z" fill="none" stroke="#dcdcdc" stroke-width="1.1"/><path d="M-5,4 L-7,7 L-3.5,6 Z" fill="#dcdcdc"/></g>
<path d="M45.7,312.8 v-2.6 l-2.6,2.6 Z" fill="#dcdcdc"/>
<g transform="translate(15.0,324.0) scale(.87)"><path d="M-3.5,6.5 C-5,4 -7,1.5 -7,0 C-6,-1 -5,0 -4,1.5 V-4.5 C-4,-6 -2.3,-6 -2.3,-4.5 V-6 C-2.3,-7.5 -0.5,-7.5 -0.5,-6 V-5.5 C-0.5,-7 1.3,-7 1.3,-5.5 V-4.5 C1.3,-5.8 3,-5.8 3,-4.5 V-2.5 C3,-3.8 4.8,-3.8 4.8,-2.5 V2 C4.8,4 4,5 3.5,6.5 Z" fill="#dcdcdc"/></g>
<path d="M23.7,330.8 v-2.6 l-2.6,2.6 Z" fill="#dcdcdc"/>
<g transform="translate(37.0,324.0) scale(.87)"><circle cx="-1.5" cy="-1.8" r="4.6" fill="none" stroke="#dcdcdc" stroke-width="1.4"/><path d="M2,1.8 L6.8,6.8" stroke="#dcdcdc" stroke-width="2"/></g>
<rect x="18.300" y="351.800" width="25" height="24.500" fill="#000" stroke="#e6e6e6" stroke-width="1.2"/>
<rect x="24" y="357.2" width="14" height="13.5" fill="#535353" stroke="#e6e6e6" stroke-width="1.2"/>
<rect x="5" y="338.6" width="24.7" height="24.3" fill="#000" stroke="#e6e6e6" stroke-width="1.2"/>
<path d="M38.500,341 Q43,341 43,345.500" fill="none" stroke="#dcdcdc" stroke-width="1.100"/><path d="M36.500,341 l2.600,-2.200 v4.400 Z M43,347.600 l-2.200,-2.600 h4.400 Z" fill="#dcdcdc"/>
<rect x="7" y="370" width="5" height="5" fill="#000" stroke="#e6e6e6" stroke-width="1"/><rect x="4.5" y="367.500" width="5" height="5" fill="#fff" stroke="#222" stroke-width=".6"/>
<rect x="4" y="381" width="14.500" height="15" fill="#2e2e2e"/>
<rect x="6" y="383.500" width="10" height="10" fill="#000" stroke="#1a1a1a"/>
<rect x="21.500" y="383.500" width="10" height="10" fill="url(#tg2)" stroke="#ccc" stroke-width=".8"/>
<rect x="36.500" y="383.500" width="10" height="10" fill="#fff" stroke="#ccc" stroke-width=".8"/><path d="M37,393 L46,384" stroke="#d42020" stroke-width="2.2"/>
<rect x="4" y="400" width="14.500" height="13.500" fill="#2e2e2e"/>
<circle cx="11.0" cy="406.500" r="3.600" fill="none" stroke="#dcdcdc" stroke-width="1.100"/>
<circle cx="26.0" cy="406.500" r="3.600" fill="none" stroke="#dcdcdc" stroke-width="1.100"/>
<circle cx="41.0" cy="406.500" r="3.600" fill="none" stroke="#dcdcdc" stroke-width="1.100"/>
<rect x="11.500" y="406.500" width="4.500" height="4.500" fill="#dcdcdc"/>
<rect x="26.500" y="406.500" width="4.500" height="4.500" fill="#dcdcdc" opacity=".8"/>
<path d="M39,405 h4 v3 h-4 Z" fill="#dcdcdc" opacity=".8"/>
<rect x="24" y="420.500" width="9" height="7" fill="#8a8a8a" stroke="#dcdcdc" stroke-width="1"/>
<rect x="18.500" y="423.500" width="9" height="7" fill="#6a6a6a" stroke="#dcdcdc" stroke-width="1"/>
</svg>
<!-- ===== FLOATING MINI PANEL ===== -->
<div class="a" style="left:694px;top:86px;width:29px;height:81px;background:#535353;border:1px solid #3e3e3e;border-radius:2px"></div>
<div class="a" style="left:695px;top:87px;width:27px;height:8px;background:#3f3f3f"></div>
<svg style="left:694px;top:86px" width="29" height="81" viewBox="0 0 29 81">
<path d="M8,3.2 l2,1.8 l-2,1.8 M11,3.2 l2,1.8 l-2,1.8" fill="#e0e0e0"/>
<path d="M19.500,3 l4,4 M23.500,3 l-4,4" stroke="#e8e8e8" stroke-width="1.300"/>
<g fill="#464646"><rect x="8" y="11" width="1" height="2"/><rect x="10" y="11" width="1" height="2"/><rect x="12" y="11" width="1" height="2"/><rect x="14" y="11" width="1" height="2"/><rect x="16" y="11" width="1" height="2"/><rect x="18" y="11" width="1" height="2"/><rect x="20" y="11" width="1" height="2"/></g>
<path d="M14.500,20.500 L21,24.500 L14.500,28.500 L8,24.500 Z" fill="#e0e0e0"/><path d="M8.500,28 L14.500,31.700 L20.500,28" fill="none" stroke="#e0e0e0" stroke-width="1.700"/>
<path d="M13,42 H9 V53 H20 V49" fill="none" stroke="#e0e0e0" stroke-width="1.300"/><path d="M13.500,48.500 L20,42 M15.500,41.600 H20.400 V46.500" fill="none" stroke="#e0e0e0" stroke-width="1.300"/>
<rect x="8.500" y="62.500" width="8" height="7" fill="none" stroke="#e0e0e0" stroke-width="1.100"/><rect x="12.500" y="66.500" width="8" height="7" fill="#535353" stroke="#e0e0e0" stroke-width="1.100"/>
</svg>

<!-- ===== SCROLLBAR COLUMN ===== -->
<div class="a" style="left:773px;top:68px;width:14px;height:453px;background:#595959"></div>
<svg style="left:776px;top:73px" width="8" height="5"><path d="M.7,4.200 L4,1 L7.300,4.200" fill="none" stroke="#d0d0d0" stroke-width="1.100"/></svg>
<svg style="left:776px;top:514px" width="8" height="5"><path d="M.7,.8 L4,4 L7.300,.8" fill="none" stroke="#a0a0a0" stroke-width="1.100"/></svg>
<div class="a" style="left:775px;top:286px;width:9px;height:18px;background:#6e6e6e;border-radius:4.500px"></div>

<!-- ===== RIGHT DOCK + PANEL ===== -->
<div class="a" style="left:786px;top:47px;width:214px;height:485px;background:#3c3c3c"></div>
<div class="a" style="left:787.500px;top:56px;width:26.500px;height:476px;background:#535353"></div>
<div class="a" style="left:816px;top:56px;width:184px;height:476px;background:#535353"></div>
<div class="a" style="left:847px;top:56px;width:153px;height:20px;background:#424242"></div>
<svg style="left:787px;top:47px" width="213" height="10" viewBox="0 0 213 10"><path d="M19.500,2.500 L17.500,4.500 L19.500,6.500 M23,2.500 L21,4.500 L23,6.500" fill="#d8d8d8" stroke="#d8d8d8" stroke-width=".6"/><path d="M203.500,2.500 l2,2 l-2,2 M207,2.500 l2,2 l-2,2" fill="#d8d8d8" stroke="#d8d8d8" stroke-width=".6"/></svg>
<!-- dock icons -->
<svg id="dock" style="left:788px;top:56px" width="26" height="250" viewBox="0 0 25 250">
<defs><linearGradient id="dg" x1="0" y1="0" x2="1" y2="0"><stop offset="0" stop-color="#e8e8e8"/><stop offset="1" stop-color="#555"/></linearGradient>
<radialGradient id="dg2" cx="0" cy="1" r="1"><stop offset="0" stop-color="#777"/><stop offset="1" stop-color="#e8e8e8"/></radialGradient></defs>
<g fill="#464646"><rect x="7" y="3" width="1" height="2"/><rect x="9" y="3" width="1" height="2"/><rect x="11" y="3" width="1" height="2"/><rect x="13" y="3" width="1" height="2"/><rect x="15" y="3" width="1" height="2"/><rect x="17" y="3" width="1" height="2"/></g>
<!-- palette y=17 -->
<path d="M12,11.500 C16.500,11.500 19.500,14 19.500,17 C19.500,19.500 17.500,19.800 15.800,19.500 C14,19.200 13.500,20.500 14,21.500 C14.500,22.500 13,23 11,23 C7.500,23 5,20.500 5,17.500 C5,14 8,11.500 12,11.500 Z" fill="#d2d2d2"/>
<g fill="#535353"><circle cx="8" cy="17" r="1.200"/><circle cx="10.500" cy="14.300" r="1.200"/><circle cx="14" cy="14" r="1.200"/><circle cx="17" cy="16" r="1.200"/><circle cx="9.500" cy="20.300" r="1.200"/></g>
<!-- color guide y=38 -->
<path d="M6.500,31 C13,31 18,36 18,44 H6.500 Z" fill="url(#dg2)" stroke="#d2d2d2" stroke-width=".8"/>
<rect x="0" y="49.500" width="25" height="1.500" fill="#3c3c3c"/>
<g fill="#464646"><rect x="7" y="54" width="1" height="2"/><rect x="9" y="54" width="1" height="2"/><rect x="11" y="54" width="1" height="2"/><rect x="13" y="54" width="1" height="2"/><rect x="15" y="54" width="1" height="2"/><rect x="17" y="54" width="1" height="2"/></g>
<!-- swatches y=67 -->
<rect x="6" y="62.500" width="13" height="9.500" fill="#d2d2d2"/><g fill="#535353"><rect x="7.500" y="64" width="2.500" height="2.500"/><rect x="11.300" y="64" width="2.500" height="2.500"/><rect x="15" y="64" width="2.500" height="2.500"/><rect x="7.500" y="68" width="2.500" height="2.500"/><rect x="11.300" y="68" width="2.500" height="2.500" opacity=".5"/><rect x="15" y="68" width="2.500" height="2.500"/></g>
<!-- brushes y=89 -->
<path d="M9,90 H16.500 L15.800,96.500 H9.700 Z" fill="#d4d4d4"/><path d="M10.800,90 V85.500 M12.800,90 V83.500 M14.800,90 V86" stroke="#d4d4d4" stroke-width="1.100" fill="none"/><ellipse cx="10.300" cy="84.500" rx="1.300" ry="1.800" fill="#d4d4d4"/><ellipse cx="12.800" cy="82.500" rx="1.100" ry="1.700" fill="#d4d4d4"/><ellipse cx="15.500" cy="85" rx="1.300" ry="1.600" fill="#d4d4d4" transform="rotate(25 15.500 85)"/>
<!-- symbols club y=109 -->
<circle cx="12.500" cy="105" r="3.100" fill="#d2d2d2"/><circle cx="9" cy="110" r="3.100" fill="#d2d2d2"/><circle cx="16" cy="110" r="3.100" fill="#d2d2d2"/><path d="M12.500,108 L10.500,116 H14.500 Z" fill="#d2d2d2"/>
<rect x="0" y="121.500" width="25" height="1.500" fill="#3c3c3c"/>
<g fill="#464646"><rect x="7" y="126" width="1" height="2"/><rect x="9" y="126" width="1" height="2"/><rect x="11" y="126" width="1" height="2"/><rect x="13" y="126" width="1" height="2"/><rect x="15" y="126" width="1" height="2"/><rect x="17" y="126" width="1" height="2"/></g>
<!-- stroke y=138 -->
<rect x="6" y="133" width="13" height="2" fill="#d2d2d2"/><rect x="6" y="137" width="13" height="2.300" fill="#d2d2d2"/><rect x="6" y="141.300" width="13" height="2.700" fill="#d2d2d2"/>
<!-- gradient y=159 -->
<rect x="6.500" y="154" width="12" height="10" fill="url(#dg)" stroke="#d2d2d2" stroke-width="1"/>
<!-- transparency y=180 -->
<circle cx="10.500" cy="178" r="4.500" fill="#d2d2d2"/><circle cx="14.500" cy="182" r="4.500" fill="#aaa" stroke="#d2d2d2" stroke-width=".8" opacity=".85"/>
<rect x="0" y="191.500" width="25" height="1.500" fill="#3c3c3c"/>
<g fill="#464646"><rect x="7" y="196" width="1" height="2"/><rect x="9" y="196" width="1" height="2"/><rect x="11" y="196" width="1" height="2"/><rect x="13" y="196" width="1" height="2"/><rect x="15" y="196" width="1" height="2"/><rect x="17" y="196" width="1" height="2"/></g>
<!-- appearance y=210 -->
<circle cx="12.500" cy="210" r="4.200" fill="#d2d2d2"/><circle cx="12.500" cy="210" r="6.300" fill="none" stroke="#d2d2d2" stroke-width="1.600" stroke-dasharray="1.400 1.350"/>
<rect x="0" y="246.500" width="25" height="1.500" fill="#3c3c3c"/>
<!-- graphic styles y=231 -->
<rect x="10.500" y="225.500" width="8" height="8" fill="none" stroke="#d2d2d2" stroke-width="1.100"/><rect x="6.500" y="230" width="7" height="7" fill="#535353" stroke="#d2d2d2" stroke-width="1.100"/><path d="M8,236 l4,-4" stroke="#d2d2d2" stroke-width="1"/>
</svg>

<!-- properties panel -->
<div class="a" style="left:876px;top:57px;width:1px;height:19px;background:#3c3c3c"></div>
<div class="t" style="left:823px;top:60.500px;font-size:9px;font-weight:bold;color:#f0f0f0">属性</div>
<div class="t g" style="left:854px;top:60.500px;font-size:9px">库</div>
<div class="t lbl" style="left:823.500px;top:85px">椭圆</div>
<div class="a" style="left:816px;top:100px;width:184px;height:1px;background:#454545"></div>
<div class="t lbl" style="left:823.500px;top:107px">变换</div>
<!-- reference point -->
<svg style="left:823px;top:133px" width="15" height="15" viewBox="0 0 15 15"><g fill="#535353" stroke="#d8d8d8" stroke-width=".9"><rect x=".8" y=".8" width="3" height="3"/><rect x="6" y=".8" width="3" height="3"/><rect x="11.200" y=".8" width="3" height="3"/><rect x=".8" y="6" width="3" height="3"/><rect x="11.200" y="6" width="3" height="3"/><rect x=".8" y="11.200" width="3" height="3"/><rect x="6" y="11.200" width="3" height="3"/><rect x="11.200" y="11.200" width="3" height="3"/></g><rect x="6" y="6" width="3" height="3" fill="#f0f0f0"/></svg>
<div class="t lbl mono" style="left:848px;top:126px">X:</div>
<div class="fld" style="left:858px;top:124px;width:40px;height:13.500px"></div>
<div class="t mono sq" style="left:861px;top:125px;font-size:9.500px">186.195</div>
<div class="t lbl" style="left:911px;top:126px">宽 :</div>
<div class="fld" style="left:925px;top:124px;width:40px;height:13.500px"></div>
<div class="t mono sq" style="left:928px;top:125px;font-size:9.500px">81.122 m</div>
<div class="t lbl mono" style="left:848px;top:143.500px">Y:</div>
<div class="fld" style="left:858px;top:143px;width:40px;height:13.500px"></div>
<div class="t mono sq" style="left:861px;top:143.500px;font-size:9.500px">63.871 m</div>
<div class="t lbl" style="left:911px;top:143.500px">高 :</div>
<div class="fld" style="left:925px;top:143px;width:40px;height:13.500px"></div>
<div class="t mono sq" style="left:928px;top:143.500px;font-size:9.500px">81.122 m</div>
<svg style="left:974px;top:133px" width="12" height="14" viewBox="0 0 12 14"><path d="M4,5.500 V3.500 a2,2 0 0 1 4,0 V5.500 M4,8.500 V10.500 a2,2 0 0 0 4,0 V8.500" fill="none" stroke="#bdbdbd" stroke-width="1.200"/><path d="M1.500,1.500 L10.500,12.500" stroke="#bdbdbd" stroke-width="1"/></svg>
<svg style="left:844px;top:164.500px" width="12" height="9" viewBox="0 0 12 9"><path d="M7.500,.8 L1,8 H8.500" fill="none" stroke="#d8d8d8" stroke-width="1"/><path d="M4.500,8 A4,4 0 0 0 3.800,5.200" fill="none" stroke="#d8d8d8" stroke-width=".8"/><circle cx="10.500" cy="3.500" r=".6" fill="#d8d8d8"/><circle cx="10.500" cy="7" r=".6" fill="#d8d8d8"/></svg>
<div class="fld" style="left:858px;top:162px;width:27px;height:13.500px"></div>
<div class="t mono sq" style="left:860px;top:162.500px;font-size:9.500px">45°</div>
<div class="dd" style="left:885px;top:162px;width:13px;height:13.500px"></div>
<svg style="left:888px;top:167px" width="7" height="5"><path d="M.7,.8 L3.500,3.600 L6.300,.8" fill="none" stroke="#e0e0e0" stroke-width="1.200"/></svg>
<svg style="left:927px;top:163.500px" width="12" height="11" viewBox="0 0 12 11"><path d="M6,0 V11" stroke="#cfcfcf" stroke-width=".9" stroke-dasharray="1.500 1"/><path d="M4.500,5.500 L.5,2 V9 Z" fill="none" stroke="#cfcfcf" stroke-width=".9"/><path d="M7.500,5.500 L11.500,2 V9 Z" fill="#cfcfcf"/></svg>
<svg style="left:948px;top:162.500px" width="11" height="12" viewBox="0 0 11 12"><path d="M0,6 H11" stroke="#cfcfcf" stroke-width=".9" stroke-dasharray="1.500 1"/><path d="M5.500,4.500 L2,.5 H9 Z" fill="#cfcfcf"/><path d="M5.500,7.500 L2,11.500 H9 Z" fill="none" stroke="#cfcfcf" stroke-width=".9"/></svg>
<svg style="left:979px;top:185px" width="12" height="3"><circle cx="1.500" cy="1.500" r="1.300" fill="#d8d8d8"/><circle cx="6" cy="1.500" r="1.300" fill="#d8d8d8"/><circle cx="10.500" cy="1.500" r="1.300" fill="#d8d8d8"/></svg>
<div class="a" style="left:816px;top:196px;width:184px;height:1px;background:#454545"></div>
<div class="t lbl" style="left:823.500px;top:202.500px">外观</div>
<div class="a" style="left:823.500px;top:219px;width:13px;height:13px;background:#000;border:1px solid #e0e0e0;box-shadow:0 0 0 1px #3f3f3f"></div>
<div class="t lbl" style="left:846px;top:220px">填色</div>
<div class="a" style="left:823.500px;top:240.500px;width:13px;height:13px;background:#000;border:1px solid #e0e0e0;box-shadow:0 0 0 1px #3f3f3f"></div>
<div class="a" style="left:827px;top:244px;width:6px;height:6px;background:#535353;border:1px solid #e0e0e0"></div>
<div class="t lbl u" style="left:846px;top:241px;color:#e0e0e0">描边</div>
<div class="dd" style="left:882.500px;top:240.500px;width:11.500px;height:13px"></div>
<svg style="left:884.500px;top:240.500px" width="8" height="13"><path d="M1,4.200 L4,1.200 L7,4.200 M1,8.800 L4,11.800 L7,8.800" fill="none" stroke="#e0e0e0" stroke-width="1.200"/></svg>
<div class="fld" style="left:895px;top:240.500px;width:24px;height:13px"></div>
<div class="t" style="left:897.500px;top:241px;font-size:10px;letter-spacing:.6px;font-family:'Liberation Serif',serif">1 pt</div>
<div class="dd" style="left:919px;top:240.500px;width:13px;height:13px"></div>
<svg style="left:921.500px;top:245.500px" width="7" height="5"><path d="M.7,.8 L3.500,3.600 L6.300,.8" fill="none" stroke="#e0e0e0" stroke-width="1.200"/></svg>
<svg style="left:823.500px;top:262px" width="13" height="13" viewBox="0 0 13 13"><rect x=".5" y=".5" width="12" height="12" fill="#5a5a5a" stroke="#9a9a9a" stroke-width="1"/><g fill="#8e8e8e"><rect x="1" y="1" width="2.750" height="2.750"/><rect x="6.500" y="1" width="2.750" height="2.750"/><rect x="3.750" y="3.750" width="2.750" height="2.750"/><rect x="9.250" y="3.750" width="2.750" height="2.750"/><rect x="1" y="6.500" width="2.750" height="2.750"/><rect x="6.500" y="6.500" width="2.750" height="2.750"/><rect x="3.750" y="9.250" width="2.750" height="2.750"/><rect x="9.250" y="9.250" width="2.750" height="2.750"/></g></svg>
<div class="t lbl u" style="left:846px;top:262px;color:#e0e0e0">不透明度</div>
<div class="fld" style="left:882px;top:261.500px;width:37px;height:13px"></div>
<div class="t mono sq" style="left:885px;top:261.500px;font-size:9.500px">100%</div>
<div class="dd" style="left:919px;top:261.500px;width:13px;height:13px"></div>
<svg style="left:923px;top:264px" width="5" height="8"><path d="M.8,.8 L3.800,4 L.8,7.200" fill="none" stroke="#e0e0e0" stroke-width="1.200"/></svg>
<div class="t" style="left:827.500px;top:282.500px;font-size:10px;font-style:italic;color:#d8d8d8;font-family:'Liberation Serif',serif">fx<span style="font-size:8px">.</span></div>
<svg style="left:979px;top:306px" width="12" height="3"><circle cx="1.500" cy="1.500" r="1.300" fill="#d8d8d8"/><circle cx="6" cy="1.500" r="1.300" fill="#d8d8d8"/><circle cx="10.500" cy="1.500" r="1.300" fill="#d8d8d8"/></svg>
<div class="a" style="left:816px;top:317px;width:184px;height:1px;background:#454545"></div>
<div class="t lbl" style="left:823.500px;top:326.500px">快速操作</div>
<div class="a btn" style="left:823.500px;top:342.500px;width:74px;height:14.500px">位移路径</div>
<div class="a btn" style="left:903.500px;top:342.500px;width:74px;height:14.500px">扩展形状</div>
<div class="a btn" style="left:823.500px;top:365px;width:74px;height:14.500px">排列</div>
<div class="a btn" style="left:903.500px;top:365px;width:74px;height:14.500px">对齐像素网格</div>
<div class="a btn" style="left:823.500px;top:387.500px;width:154px;height:14.500px">重新着色</div>


<!-- ===== STATUS BAR ===== -->
<div class="a" style="left:54px;top:521px;width:733px;height:11px;background:#535353"></div>
<div class="a" style="left:54px;top:521px;width:40px;height:11px;background:#4a4a4a"></div>
<div class="t mono sq" style="left:58.500px;top:520.500px;font-size:10.500px">66.67%</div>
<div class="a" style="left:95px;top:521px;width:12px;height:11px;background:#4a4a4a"></div>
<svg style="left:97px;top:524.500px" width="7" height="5"><path d="M.7,.8 L3.500,3.600 L6.300,.8" fill="none" stroke="#e0e0e0" stroke-width="1.200"/></svg>
<svg style="left:112px;top:523px" width="96" height="8" viewBox="0 0 96 8"><g fill="#787878"><rect x="1" y="1" width="1.300" height="6"/><path d="M7,1 V7 L3,4 Z"/><path d="M19,1 V7 L15,4 Z"/><path d="M75,1 V7 L79,4 Z"/><path d="M87,1 V7 L91,4 Z"/><rect x="91.700" y="1" width="1.300" height="6"/></g></svg>
<div class="a" style="left:137px;top:521px;width:29px;height:11px;background:#464646"></div>
<div class="t mono sq" style="left:139.500px;top:520.500px;font-size:10.500px">1</div>
<div class="a" style="left:167px;top:521px;width:12px;height:11px;background:#4a4a4a"></div>
<svg style="left:169.500px;top:524.500px" width="7" height="5"><path d="M.7,.8 L3.500,3.600 L6.300,.8" fill="none" stroke="#e0e0e0" stroke-width="1.200"/></svg>
<div class="t" style="left:275px;top:521px;font-size:8.500px;color:#d4d4d4;line-height:11px;height:11px">选择</div>
<svg style="left:361px;top:523.500px" width="5" height="7"><path d="M.5,.3 V6.700 L4.500,3.500 Z" fill="#e4e4e4"/></svg>
<div class="a" style="left:370px;top:521px;width:403px;height:11px;background:#595959"></div>
<svg style="left:374px;top:523.500px" width="5" height="7"><path d="M3.800,.6 L1,3.500 L3.800,6.400" fill="none" stroke="#c8c8c8" stroke-width="1"/></svg>
<svg style="left:765px;top:523.500px" width="5" height="7"><path d="M1,.6 L3.800,3.500 L1,6.400" fill="none" stroke="#c8c8c8" stroke-width="1"/></svg>
<div class="a" style="left:562px;top:522px;width:19px;height:9px;background:#707070;border-radius:4.500px"></div>
<!-- ===== BOTTOM STRIP ===== -->
<div class="a" style="left:0;top:532px;width:1000px;height:7px;background:#1e1b11"></div>
<div class="a" style="left:0;top:533px;width:52px;height:6px;background:#2a2614"></div>
<div class="a" style="left:545px;top:533px;width:36px;height:6px;background:#4c4736"></div>
<div class="a" style="left:866px;top:533px;width:48px;height:6px;background:#3a3122"></div>
<div class="a" style="left:924px;top:535.500px;width:22px;height:4px;overflow:hidden"><div class="t" style="left:0;top:0;font-size:9px;color:#fff;font-weight:bold">23:18</div></div>

<!-- ===== OVERLAYS ===== -->
<!-- Sogou IME bar -->
<div class="a" style="left:845px;top:107.500px;width:151px;height:18.500px;background:#fdfdfd;border-radius:2px"></div>
<svg style="left:842px;top:105px" width="26" height="23" viewBox="0 0 26 23"><rect x="2" y="2.500" width="20" height="18" rx="3" fill="#e9522b" transform="rotate(-10 12 11.500)"/><text x="12" y="19" text-anchor="middle" font-family="'Liberation Sans',sans-serif" font-weight="bold" font-size="21" fill="#fff" transform="rotate(-8 12 12) translate(12 0) scale(1.250,.92) translate(-12 1.200)" style="letter-spacing:0">S</text></svg>
<div class="t" style="left:869px;top:110px;font-size:11px;font-weight:bold;color:#1f6db2;line-height:14px;height:14px">英</div>
<svg style="left:886px;top:112px" width="110" height="12" viewBox="0 0 110 12">
<circle cx="2" cy="3" r="1.100" fill="#1b6bb8"/><path d="M6,4 c.8,.5 .8,2 -.8,3.200" stroke="#1b6bb8" stroke-width="1.300" fill="none"/>
<circle cx="20.500" cy="5" r="5.200" fill="none" stroke="#1b6bb8" stroke-width="1.100"/><circle cx="18.700" cy="3.800" r=".8" fill="#1b6bb8"/><circle cx="22.300" cy="3.800" r=".8" fill="#1b6bb8"/><path d="M17.800,6.300 c1.500,2 4,2 5.500,0" fill="none" stroke="#1b6bb8" stroke-width=".9"/>
<rect x="34.300" y="-1" width="3.600" height="7" rx="1.800" fill="#1b6bb8"/><path d="M32.500,3.500 c0,5 7.200,5 7.200,0 M36.100,7.300 V10 M33.500,10.300 h5.200" fill="none" stroke="#1b6bb8" stroke-width="1"/>
<rect x="47" y="0.500" width="11.500" height="8" rx="1" fill="none" stroke="#1b6bb8" stroke-width="1.100"/><path d="M49,3 h7.500 M49,5 h7.500 M50,7 h5.500" stroke="#1b6bb8" stroke-width=".9" stroke-dasharray="1 .6"/>
<circle cx="68" cy="2.500" r="2.500" fill="#b9c3d6"/><path d="M63.500,10 c0,-5.500 9,-5.500 9,0 Z" fill="#b9c3d6"/><circle cx="72" cy="8" r="2" fill="#d0d7e4"/>
<path d="M80.500,0 l2,-1 c1,1 2.500,1 3.500,0 l2,1 l2,2.500 l-2,1.500 l-.8,-.8 V10 h-5.800 V3.200 l-.8,.8 l-2,-1.500 Z" fill="#1b6bb8"/>
<path d="M104,-.5 c-2.500,-.5 -4.500,2 -3.500,4.200 L96,8.200 c-.8,.8 .7,2.300 1.500,1.500 L102,5.200 c2.300,1 4.700,-1 4.200,-3.500 l-2,2 l-1.700,-.4 l-.4,-1.700 Z" fill="#1b6bb8"/>
</svg>
<!-- net speed widget -->
<div class="a" style="left:905px;top:210.500px;width:84px;height:28px;background:#f3f3f3;border-radius:14px;box-shadow:0 1px 3px rgba(0,0,0,.45)"></div>
<div class="a" style="left:896px;top:207px;width:34px;height:34px;border-radius:17px;background:linear-gradient(#5ad07c 0,#2fc25b 30%,#2bb955 100%);border:1.500px solid #e8f8ec;box-shadow:0 1px 3px rgba(0,0,0,.5)"></div>
<div class="a" style="left:904px;top:209px;width:18px;height:4px;border-radius:2px;background:#9fe3b2;opacity:.7"></div>
<div class="t" style="left:896px;top:217.500px;width:34px;text-align:center;font-size:10.500px;color:#d2f5da;line-height:13px;height:13px">79%</div>
<svg style="left:933px;top:215px" width="6" height="20" viewBox="0 0 6 20"><path d="M3,0.500 L5.600,3.500 H3.800 V7.500 H2.200 V3.500 H.4 Z" fill="#e0524c"/><path d="M3,18.500 L5.600,15.500 H3.800 V11.500 H2.200 V15.500 H.4 Z" fill="#3aa85a"/></svg>
<div class="t" style="left:940px;top:214px;width:27px;text-align:right;font-size:8px;color:#262626;line-height:11px;height:11px;letter-spacing:-.3px;-webkit-text-stroke:.2px #262626">0.05K/s</div>
<div class="t" style="left:940px;top:225px;width:27px;text-align:right;font-size:8px;color:#262626;line-height:11px;height:11px;letter-spacing:-.3px;-webkit-text-stroke:.2px #262626">8.4K/s</div>
<div class="a" style="left:971.500px;top:218.500px;width:12px;height:12px;border-radius:6px;background:#2f7fd8"></div>
<div class="a" style="left:974px;top:223.750px;width:7px;height:1.500px;background:#fff"></div>
<div class="a" style="left:976.750px;top:221px;width:1.500px;height:7px;background:#fff"></div>
<div class="a" style="left:980px;top:217.500px;width:4.500px;height:4.500px;border-radius:3px;background:#e8413c"></div>
<!-- Baidu watermark -->
<div class="a" id="wm" style="left:0;top:0;width:1000px;height:532px;overflow:hidden;opacity:.72;color:#fff">
<div class="t" style="left:766px;top:451.500px;font-size:37.500px;font-weight:bold;line-height:44px;height:44px;letter-spacing:-.5px;transform:scaleX(1.150);transform-origin:0 50%">Bai</div>
<svg style="left:826px;top:432px" width="58" height="60" viewBox="0 0 58 60">
<ellipse cx="9" cy="22" rx="5.200" ry="7" fill="#fff" transform="rotate(-12 9 22)"/>
<ellipse cx="21" cy="9" rx="5.400" ry="7.300" fill="#fff" transform="rotate(-4 21 9)"/>
<ellipse cx="36.500" cy="9" rx="5.400" ry="7.300" fill="#fff" transform="rotate(6 36.500 9)"/>
<ellipse cx="48.800" cy="24" rx="5.200" ry="6.800" fill="#fff" transform="rotate(14 48.800 24)"/>
<path d="M29,22 C35,22 38,27 42,32 C46,37 52,40 52,47 C52,54 46,57 40,56.500 C35,56 33,55 29,55 C25,55 23,56 18,56.500 C12,57 6,54 6,47 C6,40 12,37 16,32 C20,27 23,22 29,22 Z" fill="#fff"/>
<text x="29" y="50" text-anchor="middle" font-family="'Liberation Sans',sans-serif" font-weight="bold" font-size="20" fill="#535353" transform="translate(29 0) scale(1.300 1) translate(-29 0)" style="letter-spacing:-.5px">du</text>
</svg>
<div class="t" style="left:882px;top:452px;font-size:31px;font-weight:bold;line-height:44px;height:44px;letter-spacing:-.5px">经验</div>
<div class="t" style="left:768.500px;top:492.500px;font-size:22px;line-height:26px;height:26px;-webkit-text-stroke:.3px #fff">jingyan.baidu.com</div>
</div>

</body>
</html>
